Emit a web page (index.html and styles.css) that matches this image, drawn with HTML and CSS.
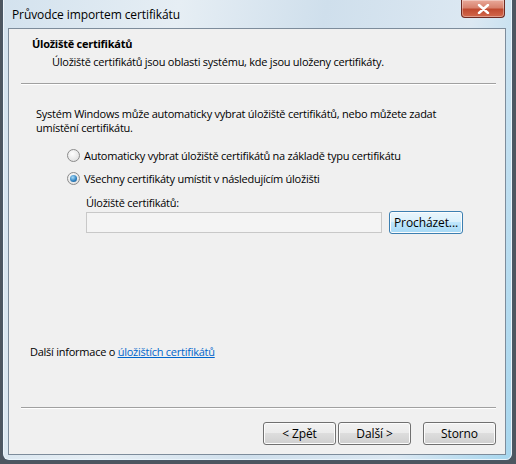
FILE: index.html
```html
<!DOCTYPE html>
<html lang="cs">
<head>
  <meta charset="UTF-8">
  <title>Průvodce importem certifikátu</title>
  <link rel="stylesheet" href="styles.css">
</head>
<body>

  <div class="window">
    <div class="titlebar">
      <span class="title">Průvodce importem certifikátu</span>
      <span class="close">
        <svg width="13" height="10" viewBox="0 0 13 10"><path d="M2 1 L11 9 M11 1 L2 9" stroke="#fff" stroke-width="2.4" stroke-linecap="round"/></svg>
      </span>
    </div>

    <div class="client">
      <div class="header">
        <div class="heading">Úložiště certifikátů</div>
        <div class="subtitle">Úložiště certifikátů jsou oblasti systému, kde jsou uloženy certifikáty.</div>
      </div>
      <div class="sep"></div>

      <div class="content">
        <p class="intro">Systém Windows může automaticky vybrat úložiště certifikátů, nebo můžete zadat umístění certifikátu.</p>

        <label class="option"><span class="radio"></span>Automaticky vybrat úložiště certifikátů na základě typu certifikátu</label>
        <label class="option"><span class="radio checked"></span>Všechny certifikáty umístit v následujícím úložišti</label>

        <div class="store">
          <div class="store-label">Úložiště certifikátů:</div>
          <div class="store-row">
            <div class="field"></div>
            <button class="btn focused">Procházet...</button>
          </div>
        </div>

        <div class="more">Další informace o <a href="#">úložištích certifikátů</a></div>
      </div>

      <div class="sep"></div>
      <div class="footer">
        <button class="btn">&lt; Zpět</button>
        <button class="btn">Další &gt;</button>
        <button class="btn cancel">Storno</button>
      </div>
    </div>
  </div>

</body>
</html>
```

FILE: styles.css
```css
body { margin: 0; background: #4d5660; font-family: "Open Sans", "Noto Sans", sans-serif; font-size: 11px; letter-spacing: -0.25px; color: #000; height: 464px; overflow: hidden; }
.window { margin: 0 3px 0 2px; height: 461px; box-sizing: border-box; border: 1px solid #4a5866; border-top: none; border-radius: 0 0 7px 7px; padding: 0 6px 6px 5px; background: linear-gradient(100deg, #d3e2ee 0%, #e6eef4 30%, #cfdfec 55%, #dce8f2 80%, #a6d6ee 100%); box-shadow: inset 1px 0 0 #eef5fb, inset -1px 0 0 #e9f4fb, inset 0 -1px 0 #eaf4fb; }
.titlebar { height: 28px; display: flex; align-items: flex-start; justify-content: space-between; }
.title { margin: 6px 0 0 4px; font-size: 12px; letter-spacing: -0.1px; color: #000; }
.close { width: 42px; height: 17px; margin-right: 1px; border: 1px solid #6e2a22; border-top: none; border-radius: 0 0 4px 4px; background: linear-gradient(#e9a99a 0%, #d8826e 45%, #c04a30 55%, #d2684c 100%); display: flex; align-items: center; justify-content: center; box-shadow: inset 0 0 0 1px rgba(255,255,255,0.35); }
.client { height: 427px; box-sizing: border-box; border: 1px solid #7d8c9b; background: #f0f0f0; display: flex; flex-direction: column; }
.header { padding: 7px 0 0 23px; height: 46px; box-sizing: border-box; }
.heading { font-weight: bold; line-height: 15px; }
.subtitle { margin: 3px 0 0 20px; line-height: 15px; }
.sep { height: 0; border-top: 1px solid #a0a0a0; border-bottom: 1px solid #fff; margin: 8px 9px 0 12px; }
.content { flex: 1; padding: 0 0 0 27px; }
.intro { margin: 22px 30px 0 0; line-height: 14px; }
.option { display: flex; align-items: center; margin: 0 0 0 31px; line-height: 15px; height: 15px; }
.option:first-of-type { margin-top: 13px; }
.option + .option { margin-top: 8px; }
.radio { width: 11px; height: 11px; border-radius: 50%; border: 1px solid #8b8b8b; background: radial-gradient(circle at 40% 35%, #fdfdfd, #dadada); margin-right: 4px; position: relative; }
.radio.checked::after { content: ""; position: absolute; left: 2px; top: 2px; width: 7px; height: 7px; border-radius: 50%; background: radial-gradient(circle at 40% 35%, #a8dcf8, #2a7dbd 60%, #164c7c); }
.store { margin: 9px 0 0 50px; }
.store-label { line-height: 15px; }
.store-row { display: flex; align-items: center; margin-top: 1px; }
.field { width: 294px; height: 19px; border: 1px solid #c8c8c8; background: #f4f4f4; }
.btn { font-family: inherit; font-size: 12px; letter-spacing: -0.1px; color: #000; height: 23px; width: 74px; padding: 0; border: 1px solid #707070; border-radius: 3px; background: linear-gradient(#f2f2f2 0%, #ebebeb 49%, #dddddd 50%, #cfcfcf 100%); box-shadow: inset 0 0 0 1px #fcfcfc; }
.btn.focused { margin-left: 7px; border-color: #3c7fb1; background: linear-gradient(#eaf6fd 0%, #d9f0fc 49%, #bee6fd 50%, #a7d9f5 100%); }
.more { margin: 110px 0 0 -6px; line-height: 15px; }
.more a { color: #0066cc; }
.footer { height: 45px; display: flex; align-items: flex-start; padding: 13px 0 0 254px; box-sizing: border-box; }
.footer .btn { width: 73px; margin-right: 2px; }
.footer .btn.cancel { margin-left: 10px; }
```
